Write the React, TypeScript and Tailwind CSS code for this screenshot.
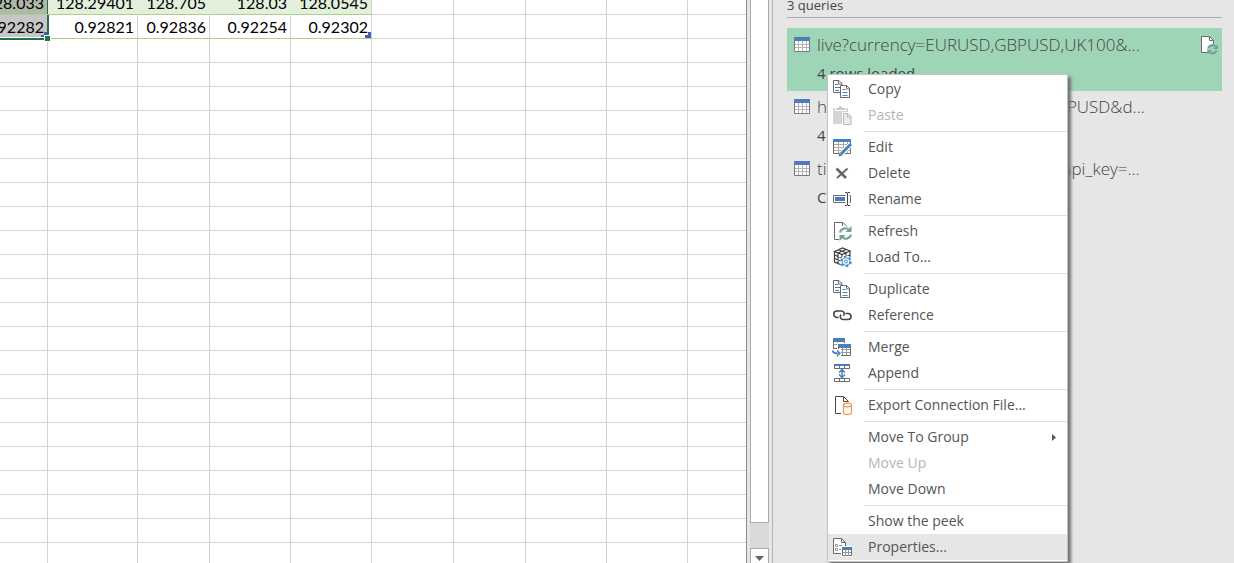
import type { ReactNode } from "react";
import clsx from "clsx";

const GREY = "#6b6b6b";
const BLUE = "#4a7fb8";
const GREEN = "#6fa58e";

function Icon({ children }: { children: ReactNode }) {
  return (
    <svg viewBox="0 0 20 20" className="size-5 shrink-0" fill="none" aria-hidden="true">
      {children}
    </svg>
  );
}

function CopyIcon() {
  return (
    <Icon>
      <path d="M1.5 1.5h5.5l3 3v9h-8.500z" fill="#fff" stroke={GREY} />
      <path d="M6.500 1.500v3.500h3.500" stroke={GREY} />
      <path d="M3 5.500h3M3 8.500h5M3 11.500h4" stroke={BLUE} />
      <path d="M8.500 6.500h6l3 3v9h-9z" fill="#fff" stroke={GREY} />
      <path d="M14.500 6.500v3.500h3" stroke={GREY} />
      <path d="M10.500 10.500h3M10.500 13.500h5M10.500 16.500h5" stroke={BLUE} />
    </Icon>
  );
}

function PasteIcon() {
  return (
    <Icon>
      <path d="M1 3h15v16H1z" fill="#d4d4d4" />
      <path d="M3 2h11v4H3z" fill="#fff" />
      <path d="M4 5V3h2.500C7 .5 10 .5 10.500 3H13v2z" fill="#c9c9c9" />
      <path d="M10 7h7l3 3v11H10z" fill="#fff" />
      <path d="M11.500 8.500h4.500l3 3v8h-7.500z" fill="#ebebeb" stroke="#bbb" />
      <path d="M15.500 8.500v3.500h3.500" stroke="#bbb" />
    </Icon>
  );
}

function EditIcon() {
  return (
    <Icon>
      <path d="M1.500 4.500h17v12h-17z" fill="#fff" stroke={GREY} />
      <path d="M2 7.500h16M2 10.500h16M2 13.500h16M6.500 5v11M11.500 5v11M15.500 5v11" stroke="#aaa" />
      <path d="M1 2h18v3H1z" fill={BLUE} />
      <path d="M18.500 7.500L8.500 17.500" stroke="#fff" strokeWidth="5" />
      <path d="M19 7L9 17" stroke={BLUE} strokeWidth="3" />
      <path d="M6.500 19.500l1-4 3 3z" fill={BLUE} />
    </Icon>
  );
}

function DeleteIcon() {
  return (
    <Icon>
      <path d="M4.500 5.500L14 15" stroke="#666" strokeWidth="2.600" />
      <path d="M15.500 5.500L5 15" stroke="#666" strokeWidth="1.800" />
    </Icon>
  );
}

function RenameIcon() {
  return (
    <Icon>
      <path d="M13.500 6.500h-12v7h12M17.500 6.500h1v7h-1" stroke={GREY} />
      <path d="M3 8h10v4H3z" fill={BLUE} />
      <path d="M13 3.500h2l.5.500.5-.500h2M13 16.500h2l.5-.500.5.500h2M15.500 4v12" stroke="#444" />
    </Icon>
  );
}

function SyncArrows() {
  return (
    <g stroke={GREEN} strokeWidth="2">
      <path d="M8 11.500a5.300 5.300 0 0 1 9-2.500" />
      <path d="M19 13.500a5.300 5.300 0 0 1-9 2.500" />
      <path d="M19.500 5v6h-6z" fill={GREEN} stroke="none" />
      <path d="M7.500 20v-6h6z" fill={GREEN} stroke="none" />
    </g>
  );
}

function RefreshIcon() {
  return (
    <Icon>
      <path d="M7 18.500H2.500v-17H11l4 4" stroke={GREY} />
      <path d="M10.500 1.500V5" stroke={GREY} />
      <SyncArrows />
    </Icon>
  );
}

function LoadIcon() {
  return (
    <Icon>
      <path d="M2 4.500L10.500 1l7.500 3v5L10 18l-8-3z" fill="#fff" />
      <path
        d="M2.500 4.500L10.500 1 18 4l-8 3.500zM2.500 4.500V15l7.500 3V7.500M18 4v6M6 6v10.500M2.500 8l7.500 3 8-3M2.500 11.500l7.500 3M6.500 2.800l7.500 3M6 6l8-3.500M14 6v4"
        stroke="#3f3f3f"
        strokeWidth="1.200"
      />
      <circle cx="14" cy="14.500" r="6" fill="#fff" />
      <circle cx="14" cy="14.500" r="4.800" stroke="#3f8fd0" strokeWidth="2" strokeDasharray="2.500 2.500" />
      <circle cx="14" cy="14.500" r="3.900" stroke="#3f8fd0" />
      <circle cx="14" cy="14.500" r="1.500" stroke="#3f8fd0" />
    </Icon>
  );
}

function LinkIcon() {
  return (
    <Icon>
      <path d="M6.500 12.500H5a3.200 3.200 0 0 1 0-6.500H9a3 3 0 0 1 2.500 5" stroke="#444" strokeWidth="1.600" />
      <path d="M13.500 8.500H16a3 3 0 0 1 0 6h-4.500a3 3 0 0 1-2.500-5" stroke="#444" strokeWidth="1.600" />
    </Icon>
  );
}

function MergeIcon() {
  return (
    <Icon>
      <path d="M1.500 3.500h11v8h-11z" fill="#fff" stroke={GREY} />
      <path d="M2 7.500h5M5.500 4v8" stroke="#999" />
      <path d="M1 1h12v4H1z" fill={BLUE} />
      <path d="M5 6h15v14H5z" fill="#fff" />
      <path d="M6.500 8.500h12v10h-12z" stroke={GREY} />
      <path d="M7 12.500h11M7 15.500h11M10.500 10v8M14.500 10v8" stroke="#999" />
      <path d="M6 7h13v4H6z" fill={BLUE} />
      <path d="M0 12h9v8H0z" fill="#fff" />
      <path d="M.8 13.500c0 2 1 2.800 5 2.800" stroke={BLUE} strokeWidth="1.800" />
      <path d="M5 12.500l4 3.700L5 20v-2l1.500-1.800L5 14.500z" fill={BLUE} />
    </Icon>
  );
}

function AppendIcon() {
  return (
    <Icon>
      <path d="M2.500 2.500h15v3h-15zM7.500 3v3M12.500 3v3" stroke={GREY} />
      <path d="M2 1h16v2H2z" fill={BLUE} />
      <path d="M2.500 15.500h15v3h-15zM7.500 16v3M12.500 16v3" stroke={GREY} />
      <path d="M7 9.500l3-3 3 3M7 11.500l3 3 3-3M10 7.500v6" stroke={BLUE} strokeWidth="1.400" />
    </Icon>
  );
}

function ExportIcon() {
  return (
    <Icon>
      <path d="M9 18.500H3.500v-17h8l5 5M11.500 1.500v5h5" stroke="#4a4a4a" />
      <path d="M11.500 10v8c0 2 8 2 8 0v-8" fill="#fff" stroke="#f0984a" strokeWidth="1.300" />
      <ellipse cx="15.500" cy="10" rx="4" ry="1.800" fill="#fff" stroke="#f0984a" strokeWidth="1.300" />
    </Icon>
  );
}

function PropertiesIcon() {
  return (
    <Icon>
      <path d="M9 16.500H1.500v-15h8l4 4V9M9.500 1.500v4h4" fill="#fff" stroke={GREY} />
      <path d="M3.500 7.500h2v2h-2zM3.500 11.500h2v2h-2z" stroke="#999" />
      <path d="M7 8.500h3M7 12.500h2" stroke="#888" />
      <path d="M9 9h11v11H9z" fill="#fff" />
      <path d="M10.500 10.500h9v8h-9z" stroke={GREY} />
      <path d="M11 15.500h8M13.500 13v6M16.500 13v6" stroke="#999" />
      <path d="M10 10h10v3H10z" fill={BLUE} />
    </Icon>
  );
}

function TableIcon() {
  return (
    <svg viewBox="0 0 16 15" className="h-[15px] w-4 shrink-0" aria-hidden="true">
      <path d="M.5 1.500h15v13H.5z" fill="#fff" stroke="#7a7a7a" />
      <path d="M1 7.500h14M1 10.500h14M4.500 4v10M8.500 4v10M12.500 4v10" stroke="#b5b5b5" />
      <path d="M0 0h16v4H0z" fill={BLUE} />
    </svg>
  );
}

function PageRefreshIcon() {
  return (
    <svg viewBox="0 0 18 20" className="mt-[2px] h-5 w-[18px] shrink-0" fill="none" aria-hidden="true">
      <path d="M1.500 1.500h8l4 4v12h-12z" fill="#fff" stroke={GREY} />
      <path d="M9.500 1.500v4h4" stroke={GREY} />
      <circle cx="12.500" cy="14.500" r="5.500" fill="#9fd5b7" />
      <g stroke={GREEN} strokeWidth="2">
        <path d="M8.500 13a4.200 4.200 0 0 1 7.500-.800" />
        <path d="M16.500 15.500a4.200 4.200 0 0 1-7.500 1" />
        <path d="M18 9.500v4.500h-4.500z" fill={GREEN} stroke="none" />
        <path d="M7.500 19.500V15H12z" fill={GREEN} stroke="none" />
      </g>
    </svg>
  );
}

const values = [
  ["128.033", "128.29401", "128.705", "128.03", "128.0545"],
  ["0.92282", "0.92821", "0.92836", "0.92254", "0.92302"],
];
const blankRows = Array.from({ length: 22 }, (_, i) => i);
const blankCells = (n: number) => Array.from({ length: n }, (_, i) => i);

function TableCorner() {
  return (
    <svg viewBox="0 0 6 6" className="absolute right-0 bottom-0 size-[6px]" aria-hidden="true">
      <path d="M3 0h3v6H0V3h3z" fill="#4a5bb5" />
    </svg>
  );
}

function Sheet() {
  return (
    <section aria-label="Worksheet" className="min-w-0 flex-1 overflow-hidden border-r border-[#8c8c8c] bg-white">
      <table className="-mt-[9px] w-full table-fixed border-separate border-spacing-0 font-[Lato,sans-serif] text-base text-black">
        <colgroup>
          <col className="w-12" />
          <col className="w-[90px]" />
          <col className="w-[72px]" />
          <col className="w-[81px]" />
          <col className="w-[81px]" />
          <col className="w-[82px]" />
          <col className="w-[72px]" />
          <col className="w-[81px]" />
          <col className="w-[81px]" />
          <col />
        </colgroup>
        <tbody>
          {values.map((row, r) => (
            <tr key={r} className="h-6">
              {row.map((value, c) => (
                <td
                  key={c}
                  className={clsx(
                    "relative h-6 border-r border-b border-b-[#a9d08e] p-0",
                    r === 0 && c > 0 && c < 4 ? "border-r-[#e2efda]" : "border-r-[#d4d4d4]",
                    c === 0 && (r === 0 ? "bg-[#b0b8aa]" : "bg-[#c6c6c6]"),
                    c > 0 && r === 0 && "bg-[#e2efda]",
                  )}
                >
                  <div className="flex h-[23px] items-center justify-end overflow-hidden pr-[3px] whitespace-nowrap">
                    {value}
                  </div>
                  {r === 1 && (c === 0 || c === 4) && <TableCorner />}
                  {c === 0 && <span className="absolute top-0 -right-[2px] bottom-0 w-[2px] bg-[#217346]" />}
                  {c === 0 && r === 1 && (
                    <>
                      <span className="absolute right-0 -bottom-[2px] left-0 h-[3px] border-t border-white bg-[#217346]" />
                      <span className="absolute -right-[4px] -bottom-[4px] z-10 size-[7px] border border-white bg-[#217346]" />
                    </>
                  )}
                </td>
              ))}
              {blankCells(5).map((c) => (
                <td key={c} className="border-r border-b border-[#d4d4d4] p-0 last:border-r-0" />
              ))}
            </tr>
          ))}
          {blankRows.map((r) => (
            <tr key={r} className="h-6">
              {blankCells(10).map((c) => (
                <td key={c} className="border-r border-b border-[#d4d4d4] p-0 last:border-r-0" />
              ))}
            </tr>
          ))}
        </tbody>
      </table>
    </section>
  );
}

function ScrollBar() {
  return (
    <div className="flex w-[25px] shrink-0 flex-col bg-[#e6e6e6] px-[3px]">
      <div className="flex flex-1 flex-col bg-[#dadada]">
        <div className="flex-1 border border-t-0 border-[#ababab] bg-white" />
        <div className="h-[25px]" />
        <button
          type="button"
          aria-label="Scroll down"
          className="flex h-[15px] items-end justify-center border border-b-0 border-[#ababab] bg-white pb-[2px]"
        >
          <svg viewBox="0 0 9 5" className="h-[5px] w-[9px]" aria-hidden="true">
            <path d="M0 0h9L4.500 5z" fill="#666" />
          </svg>
        </button>
      </div>
    </div>
  );
}

const queries = [
  { name: "live?currency=EURUSD,GBPUSD,UK100&...", status: "4 rows loaded", selected: true },
  { name: "historical/?currency=EURUSD,GBPUSD&d...", status: "4 rows loaded", selected: false },
  { name: "timeseries/?currency=EURUSD&api_key=...", status: "Connection only.", selected: false },
];

type MenuEntry = { label: string; icon?: ReactNode; disabled?: boolean; submenu?: boolean; active?: boolean };

const menuGroups: MenuEntry[][] = [
  [
    { label: "Copy", icon: <CopyIcon /> },
    { label: "Paste", icon: <PasteIcon />, disabled: true },
  ],
  [
    { label: "Edit", icon: <EditIcon /> },
    { label: "Delete", icon: <DeleteIcon /> },
    { label: "Rename", icon: <RenameIcon /> },
  ],
  [
    { label: "Refresh", icon: <RefreshIcon /> },
    { label: "Load To...", icon: <LoadIcon /> },
  ],
  [
    { label: "Duplicate", icon: <CopyIcon /> },
    { label: "Reference", icon: <LinkIcon /> },
  ],
  [
    { label: "Merge", icon: <MergeIcon /> },
    { label: "Append", icon: <AppendIcon /> },
  ],
  [{ label: "Export Connection File...", icon: <ExportIcon /> }],
  [
    { label: "Move To Group", submenu: true },
    { label: "Move Up", disabled: true },
    { label: "Move Down" },
  ],
  [{ label: "Show the peek" }, { label: "Properties...", icon: <PropertiesIcon />, active: true }],
];

function ContextMenu() {
  return (
    <div
      role="menu"
      aria-label="Query actions"
      className="absolute top-[74px] left-[54px] w-[241px] border border-[#c3c3c3] bg-white py-px shadow-[3px_3px_3px_#707070]"
    >
      {menuGroups.map((group, g) => (
        <div key={g} role="group">
          {g > 0 && (
            <div className="pt-[3px] pb-[2px] pl-9">
              <div role="separator" className="h-px bg-[#e0e0e0]" />
            </div>
          )}
          {group.map((item) => (
            <button
              key={item.label}
              type="button"
              role="menuitem"
              disabled={item.disabled}
              className={clsx(
                "flex h-[26px] w-full items-center gap-4 pr-[11px] pl-1 text-left text-sm",
                item.disabled ? "text-[#b5b5b5]" : "text-[#555]",
                item.active && "bg-[#e6e6e6]",
              )}
            >
              <span className="size-5 shrink-0">{item.icon}</span>
              <span className="flex-1 whitespace-nowrap">{item.label}</span>
              {item.submenu && (
                <svg viewBox="0 0 4 7" className="h-[7px] w-1" aria-hidden="true">
                  <path d="M0 0l4 3.500L0 7z" fill="#555" />
                </svg>
              )}
            </button>
          ))}
        </div>
      ))}
    </div>
  );
}

function QueriesPane() {
  return (
    <aside className="relative w-[462px] shrink-0 border-l border-[#b4b4b4] bg-[#e6e6e6] pr-3 pl-[14px] text-[#444]">
      <h2 className="flex h-[18px] items-end border-b border-[#ababab] pb-[2px] text-[13px] leading-5">3 queries</h2>
      <ul className="mt-[10px]">
        {queries.map((query) => (
          <li
            key={query.name}
            className={clsx("pt-[5px] pr-1 pl-[7px]", query.selected ? "-mb-px h-[63px] bg-[#9fd5b7]" : "h-[62px]")}
          >
            <button type="button" className="flex w-full items-start text-left">
              <span className="flex h-[23px] items-center">
                <TableIcon />
              </span>
              <span className="flex min-w-0 flex-1 flex-col pl-[7px] whitespace-nowrap">
                <span className="text-[17px] leading-6 font-light">{query.name}</span>
                <span className="pt-[2px] text-[15px] leading-7">{query.status}</span>
              </span>
              {query.selected && <PageRefreshIcon />}
            </button>
          </li>
        ))}
      </ul>
      <ContextMenu />
    </aside>
  );
}

export default function App() {
  return (
    <main className="flex h-screen overflow-hidden bg-[#e6e6e6] font-['Open_Sans','Noto_Sans',sans-serif]">
      <Sheet />
      <ScrollBar />
      <QueriesPane />
    </main>
  );
}
